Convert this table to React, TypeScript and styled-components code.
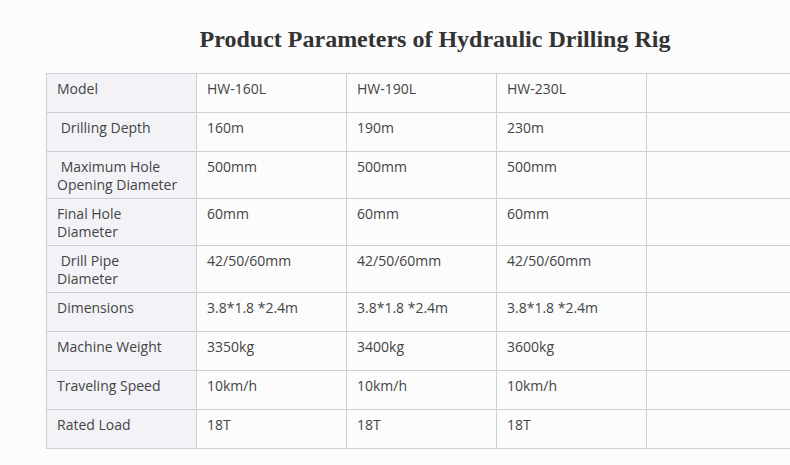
import React from "react";
import styled, { createGlobalStyle } from "styled-components";

const GlobalStyle = createGlobalStyle`
  html, body {
    margin: 0;
    padding: 0;
    background: #fcfcfc;
    overflow: hidden;
  }
`;

const Page = styled.div`
  width: 790px;
  height: 465px;
  padding: 26px 0 0 46px;
  box-sizing: border-box;
  overflow: hidden;
`;

const Title = styled.h2`
  margin: 0 0 20px;
  width: 778px;
  text-align: center;
  font-family: "Liberation Serif", "Times New Roman", serif;
  font-size: 24px;
  font-weight: bold;
  line-height: 27px;
  color: #333;
`;

const Table = styled.table`
  border-collapse: collapse;
  table-layout: fixed;
  width: 750px;
  font-family: "Open Sans", "Noto Sans", sans-serif;
  font-size: 14px;
  color: #444;
`;

const Cell = styled.td<{ $label?: boolean }>`
  width: 150px;
  height: 39px;
  box-sizing: border-box;
  padding: 6px 14px 4px 10px;
  vertical-align: top;
  line-height: 18px;
  border: 1px solid #cfcfcf;
  background: ${({ $label }) => ($label ? "#f3f3f7" : "#fcfcfc")};
  white-space: pre-wrap;
`;

const rows: string[][] = [
  ["Model", "HW-160L", "HW-190L", "HW-230L"],
  [" Drilling Depth", "160m", "190m", "230m"],
  [" Maximum Hole Opening Diameter", "500mm", "500mm", "500mm"],
  ["Final Hole Diameter", "60mm", "60mm", "60mm"],
  [" Drill Pipe Diameter", "42/50/60mm", "42/50/60mm", "42/50/60mm"],
  ["Dimensions", "3.8*1.8 *2.4m", "3.8*1.8 *2.4m", "3.8*1.8 *2.4m"],
  ["Machine Weight", "3350kg", "3400kg", "3600kg"],
  ["Traveling Speed", "10km/h", "10km/h", "10km/h"],
  ["Rated Load", "18T", "18T", "18T"],
];

const App: React.FC = () => {
  return (
    <Page>
      <GlobalStyle />
      <Title>Product Parameters of Hydraulic Drilling Rig</Title>
      <Table>
        <tbody>
          {rows.map((row, i) => (
            <tr key={i}>
              {row.map((text, j) => (
                <Cell key={j} $label={j === 0}>
                  {text}
                </Cell>
              ))}
              <Cell />
            </tr>
          ))}
        </tbody>
      </Table>
    </Page>
  );
};

export default App;
